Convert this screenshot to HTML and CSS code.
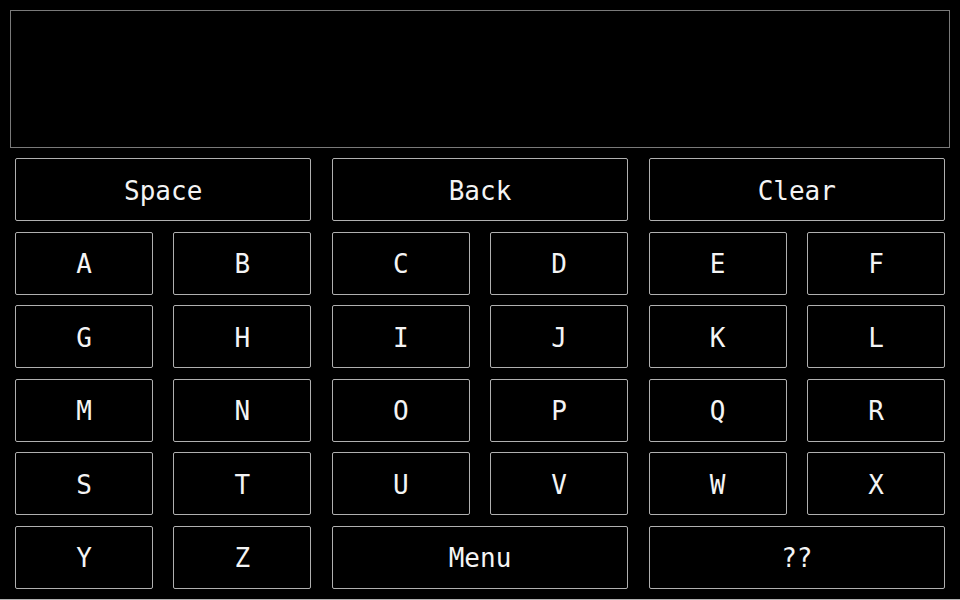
FILE: index.html
```html
<!DOCTYPE html>
<html>
<head>
<meta charset="utf-8">
<link rel="stylesheet" href="styles.css">
</head>
<body>
<div class="screen">
  <div class="display"></div>
  <div class="keypad">
    <div class="key wide">Space</div>
    <div class="key wide">Back</div>
    <div class="key wide">Clear</div>
    <div class="key">A</div><div class="key">B</div><div class="key">C</div><div class="key">D</div><div class="key">E</div><div class="key">F</div>
    <div class="key">G</div><div class="key">H</div><div class="key">I</div><div class="key">J</div><div class="key">K</div><div class="key">L</div>
    <div class="key">M</div><div class="key">N</div><div class="key">O</div><div class="key">P</div><div class="key">Q</div><div class="key">R</div>
    <div class="key">S</div><div class="key">T</div><div class="key">U</div><div class="key">V</div><div class="key">W</div><div class="key">X</div>
    <div class="key">Y</div><div class="key">Z</div>
    <div class="key wide">Menu</div>
    <div class="key wide">??</div>
  </div>
  <div class="edge"></div>
</div>
</body>
</html>
```
FILE: styles.css
```css
html, body {
  margin: 0;
  padding: 0;
  background: #000;
}
.screen {
  width: 960px;
  height: 600px;
  display: flex;
  flex-direction: column;
  overflow: hidden;
  font-family: "DejaVu Sans Mono", monospace;
  color: #f4f4f4;
}
.display {
  margin: 10px 10px 0 10px;
  height: 136px;
  border: 1px solid #7a7a7a;
}
.keypad {
  margin: 10px 15px 0 15px;
  display: grid;
  grid-template-columns: repeat(6, 1fr);
  grid-auto-rows: 63px;
  column-gap: 20.4px;
  row-gap: 10.6px;
}
.key {
  border: 1px solid #b0b0b0;
  border-radius: 2px;
  display: flex;
  align-items: center;
  justify-content: center;
  padding-top: 2px;
  box-sizing: border-box;
  font-size: 26px;
}
.wide {
  grid-column: span 2;
}
.edge {
  margin-top: 10px;
  height: 1px;
  background: #b0b0b0;
}
```
